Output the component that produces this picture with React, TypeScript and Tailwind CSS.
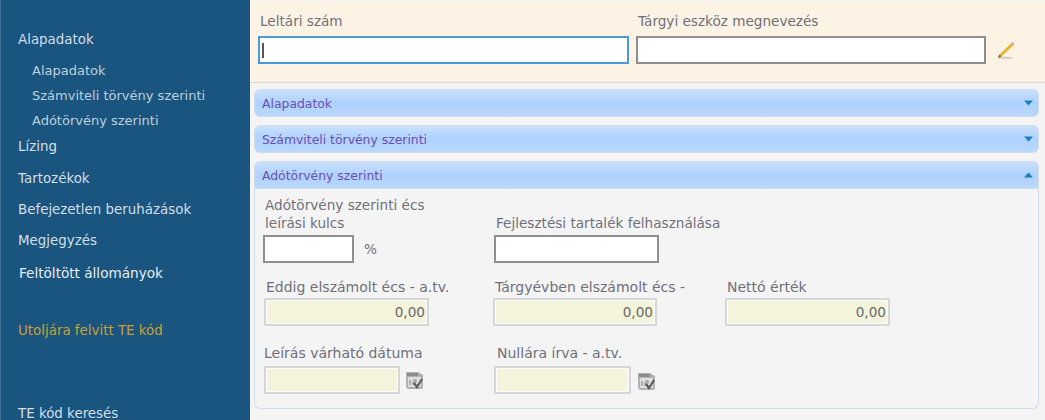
const fontStack = "font-['DejaVu_Sans',sans-serif]"

function NavItem({ label, sub, className }: { label: string; sub?: boolean; className: string }) {
  return (
    <div className={`flex shrink-0 items-center whitespace-nowrap ${sub ? "pl-[31px] text-[13px] text-[#bdd0dd]" : "pl-[17px] text-[13.4px] text-[#d3dfe7]"} ${className}`}>
      {label}
    </div>
  )
}

function AccordionHeader({ title, open }: { title: string; open?: boolean }) {
  return (
    <div
      className={`flex h-[28px] items-center justify-between border border-[#d3dde8] bg-[linear-gradient(#c9e0fd,#aed2fd_50%,#b9d8fd)] pl-[7px] pr-[5px] text-[#6b4fb0] ${
        open ? "rounded-t-[6px]" : "rounded-[6px]"
      }`}
    >
      <span className="pt-[3px] text-[12.4px]">{title}</span>
      <svg width="9" height="6" viewBox="0 0 9 6">
        <path d={open ? "M4.5 0.5 L9 5.5 H0 Z" : "M0 0.5 H9 L4.5 5.5 Z"} fill="#1a7fbe" />
      </svg>
    </div>
  )
}

function ReadonlyField({ value, className }: { value?: string; className: string }) {
  return (
    <div className={`flex h-[28px] items-center justify-end border-2 border-[#d6d6d6] bg-[#f4f3dc] pr-[2px] text-[#6b6b6b] shadow-[inset_0_0_0_1px_#fff] ${className}`}>
      {value}
    </div>
  )
}

function CalendarIcon() {
  return (
    <svg width="19" height="19" viewBox="0 0 19 19">
      <path d="M1 2 Q1 1 2 1 H13 L18 4 V16 Q18 18 16 18 H4 Q1 18 1 15 Z" fill="#b0b0b0" />
      <rect x="3" y="6" width="13" height="10" rx="1" fill="#e0e0e0" />
      <rect x="2" y="2" width="11" height="3" fill="#8c8c8c" />
      <path d="M5 9 V14 M8 9 H11 V11 H8 V14" stroke="#8a8a8a" strokeWidth="1.2" fill="none" />
      <path d="M9 12 L12 16 L17 8" stroke="#5c5c5c" strokeWidth="2.2" fill="none" />
    </svg>
  )
}

export default function App() {
  return (
    <div className={`flex h-[420px] w-[1045px] overflow-hidden bg-[#f4f4f4] text-[13.6px] text-[#70707a] ${fontStack}`}>
      {/* Sidebar */}
      <div className="flex w-[250px] shrink-0 flex-col border-l border-[#3d7096] bg-[#1a5580] pt-[28px]">
        <NavItem label="Alapadatok" className="h-[24px]" />
        <div className="h-[7px] shrink-0" />
        <NavItem sub label="Alapadatok" className="h-[24px]" />
        <NavItem sub label="Számviteli törvény szerinti" className="h-[25px]" />
        <NavItem sub label="Adótörvény szerinti" className="h-[25px]" />
        <NavItem label="Lízing" className="h-[28px]" />
        <NavItem label="Tartozékok" className="mt-[2px] h-[32px]" />
        <NavItem label="Befejezetlen beruházások" className="h-[31px]" />
        <NavItem label="Megjegyzés" className="h-[31px]" />
        <div className="flex h-[33px] shrink-0 items-center pl-[18px] text-[13.6px] text-[#e8eef2]">Feltöltött állományok</div>
        <div className="mt-[29px] flex h-[24px] shrink-0 items-center pl-[17px] text-[13.4px] text-[#c9a032]">Utoljára felvitt TE kód</div>
        <NavItem label="TE kód keresés" className="mt-[65px] h-[11px] leading-[11px]" />
      </div>

      {/* Main */}
      <div className="flex min-w-0 flex-1 flex-col">
        {/* Top form */}
        <div className="mt-[1px] flex h-[82px] items-start gap-[7px] border-b border-[#d8d8d8] bg-[#fdf3e5] pl-[8px]">
          <div className="flex w-[371px] flex-col">
            <div className="flex h-[35px] items-center pl-[2px] pt-[5px]">Leltári szám</div>
            <div className="flex h-[28px] items-center border-2 border-[#4a9ad8] bg-white pl-[2px]">
              <div className="h-[15px] w-[2px] bg-[#555]" />
            </div>
          </div>
          <div className="flex w-[350px] flex-col">
            <div className="flex h-[35px] items-center pl-[2px] pt-[5px]">Tárgyi eszköz megnevezés</div>
            <div className="h-[28px] border-2 border-[#8f8f8f] bg-white" />
          </div>
          <div className="ml-[3px] mt-[40px]">
            <svg width="20" height="20" viewBox="0 0 20 20">
              <path d="M1 17 Q9 14 19 17 Q9 19 1 17 Z" fill="#d3ccc0" />
              <path d="M2 17 L3.5 13.5 L15 2.5 L17 4.5 L5.5 15.5 Z" fill="#efae2c" />
              <path d="M2 17 L3.5 13.5 L5.5 15.5 Z" fill="#6f6450" />
              <path d="M15 2.5 L16.5 1 L18.5 3 L17 4.5 Z" fill="#e8909a" />
            </svg>
          </div>
        </div>

        {/* Accordion */}
        <div className="flex flex-col pl-[4px] pr-[6px] pt-[6px]">
          <AccordionHeader title="Alapadatok" />
          <div className="mt-[8px]">
            <AccordionHeader title="Számviteli törvény szerinti" />
          </div>
          <div className="mt-[8px]">
            <AccordionHeader title="Adótörvény szerinti" open />
          </div>
          <div className="h-[220px] rounded-b-[6px] border border-t-0 border-[#d3dde8] pl-[8px]">
            <div className="flex items-start">
              <div className="flex w-[231px] flex-col">
                <div className="h-[46px] pl-[2px] pt-[7px] leading-[18px]">
                  Adótörvény szerinti écs
                  <br />
                  leírási kulcs
                </div>
                <div className="flex items-center">
                  <div className="h-[28px] w-[91px] border-2 border-[#8f8f8f] bg-white" />
                  <span className="ml-[10px] pt-[1px]">%</span>
                </div>
              </div>
              <div className="flex flex-col">
                <div className="flex h-[46px] items-end whitespace-nowrap pb-[2px] pl-[2px]">Fejlesztési tartalék felhasználása</div>
                <div className="h-[28px] w-[165px] border-2 border-[#8f8f8f] bg-white" />
              </div>
            </div>

            <div className="mt-[9px] flex items-start pl-[1px]">
              <div className="w-[229px]">
                <div className="h-[26px] whitespace-nowrap pl-[2px] text-[14px] leading-[31px]">Eddig elszámolt écs - a.tv.</div>
                <ReadonlyField value="0,00" className="w-[165px]" />
              </div>
              <div className="w-[232px]">
                <div className="h-[26px] whitespace-nowrap pl-[2px] text-[14px] leading-[31px]">Tárgyévben elszámolt écs -</div>
                <ReadonlyField value="0,00" className="w-[164px]" />
              </div>
              <div>
                <div className="h-[26px] whitespace-nowrap pl-[2px] text-[14px] leading-[31px]">Nettó érték</div>
                <ReadonlyField value="0,00" className="w-[165px]" />
              </div>
            </div>

            <div className="mt-[14px] flex items-start pl-[1px]">
              <div className="w-[230px]">
                <div className="h-[26px] whitespace-nowrap text-[14px] leading-[27px]">Leírás várható dátuma</div>
                <div className="flex items-center gap-[5px]">
                  <ReadonlyField className="w-[136px]" />
                  <CalendarIcon />
                </div>
              </div>
              <div>
                <div className="h-[26px] whitespace-nowrap pl-[3px] text-[14px] leading-[27px]">Nullára írva - a.tv.</div>
                <div className="flex items-center gap-[6px]">
                  <ReadonlyField className="w-[137px]" />
                  <div className="pt-[3px]">
                    <CalendarIcon />
                  </div>
                </div>
              </div>
            </div>
          </div>
        </div>
      </div>
    </div>
  )
}
